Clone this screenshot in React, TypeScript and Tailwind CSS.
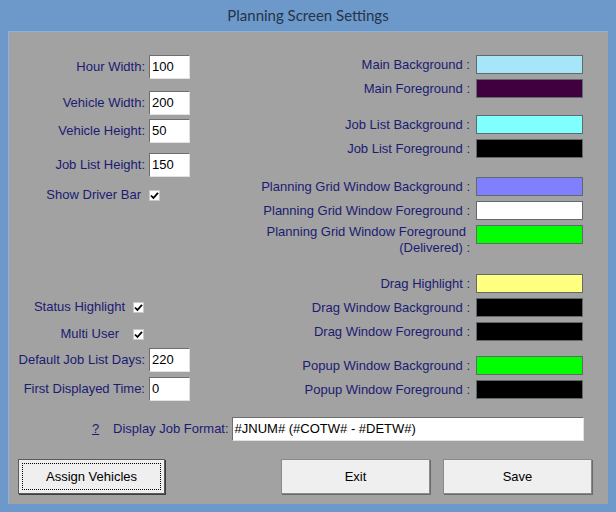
import React from 'react';

const font = { fontFamily: '"Liberation Sans", Arial, sans-serif' };

function TextBox({ value, width = 'w-[41px]' }: { value: string; width?: string }) {
  return (
    <div
      className={`${width} h-[24px] bg-white border-t border-l border-t-[#6e6e6e] border-l-[#6e6e6e] border-b border-r border-b-[#e2e2e2] border-r-[#e2e2e2] flex items-center pl-[2px] text-[13px] text-black`}
    >
      {value}
    </div>
  );
}

function CheckBox() {
  return (
    <div className="w-[11px] h-[11px] bg-white border border-[#c8c8c8] flex items-center justify-center">
      <svg width="9" height="9" viewBox="0 0 9 9">
        <path d="M1 4.5 L3.4 7 L8 1.8" fill="none" stroke="#000" strokeWidth="1.8" />
      </svg>
    </div>
  );
}

function Swatch({ color }: { color: string }) {
  return <div className={`w-[107px] h-[19px] border border-[#5f6a6a] ${color}`} />;
}

function ColorRow({ label, color, mt }: { label: string; color: string; mt: string }) {
  return (
    <div className={`flex h-[19px] items-center justify-end ${mt}`}>
      <span className="mr-[6px] whitespace-nowrap">{label}</span>
      <Swatch color={color} />
    </div>
  );
}

export default function App() {
  return (
    <div className="w-[616px] h-[512px] bg-[#6c99c9] flex flex-col text-[13px] text-[#1b1b72]" style={font}>
      {/* title bar */}
      <div className="h-[31px] flex items-center justify-center">
        <span className="text-[15px] text-[#24344a]" style={{ fontFamily: 'Lato, "Noto Sans", sans-serif' }}>
          Planning Screen Settings
        </span>
      </div>

      {/* client area */}
      <div className="mx-[8px] h-[473px] bg-[#a2a2a2] flex flex-col border-t border-l border-[#8fb3da]">
        <div className="flex">
          {/* left column */}
          <div className="w-[223px] flex flex-col mt-[23px]">
            <div className="flex h-[24px] items-center">
              <span className="w-[140px] text-right pr-[4px]">Hour Width:</span>
              <TextBox value="100" />
            </div>
            <div className="flex h-[24px] items-center mt-[12px]">
              <span className="w-[140px] text-right pr-[4px]">Vehicle Width:</span>
              <TextBox value="200" />
            </div>
            <div className="flex h-[24px] items-center mt-[4px]">
              <span className="w-[140px] text-right pr-[4px]">Vehicle Height:</span>
              <TextBox value="50" />
            </div>
            <div className="flex h-[24px] items-center mt-[10px]">
              <span className="w-[140px] text-right pr-[4px]">Job List Height:</span>
              <TextBox value="150" />
            </div>
            <div className="flex h-[24px] items-center mt-[6px]">
              <span className="w-[132px] text-right">Show Driver Bar</span>
              <div className="ml-[8px]">
                <CheckBox />
              </div>
            </div>

            <div className="flex h-[24px] items-center mt-[88px]">
              <span className="w-[116px] text-right">Status Highlight</span>
              <div className="ml-[8px]">
                <CheckBox />
              </div>
            </div>
            <div className="flex h-[24px] items-center mt-[3px]">
              <span className="w-[110px] text-right">Multi User</span>
              <div className="ml-[14px]">
                <CheckBox />
              </div>
            </div>
            <div className="flex h-[24px] items-center mt-[2px]">
              <span className="w-[140px] text-right pr-[4px] whitespace-nowrap">Default Job List Days:</span>
              <TextBox value="220" />
            </div>
            <div className="flex h-[24px] items-center mt-[5px]">
              <span className="w-[140px] text-right pr-[4px] whitespace-nowrap">First Displayed Time:</span>
              <TextBox value="0" />
            </div>
          </div>

          {/* right column */}
          <div className="flex-1 flex flex-col mt-[23px] pr-[25px]">
            <ColorRow label="Main Background :" color="bg-[#a6e6f8]" mt="" />
            <ColorRow label="Main Foreground :" color="bg-[#400040]" mt="mt-[5px]" />
            <ColorRow label="Job List Background :" color="bg-[#80ffff]" mt="mt-[17px]" />
            <ColorRow label="Job List Foreground :" color="bg-black" mt="mt-[5px]" />
            <ColorRow label="Planning Grid Window Background :" color="bg-[#8080ff]" mt="mt-[19px]" />
            <ColorRow label="Planning Grid Window Foreground :" color="bg-white" mt="mt-[5px]" />
            <div className="flex items-start justify-end mt-[5px]">
              <div className="mr-[6px] text-right leading-[16px] -mt-[1px]">
                <div className="pr-[4px] whitespace-nowrap">Planning Grid Window Foreground</div>
                <div>(Delivered) :</div>
              </div>
              <Swatch color="bg-[#00ff00]" />
            </div>
            <ColorRow label="Drag Highlight :" color="bg-[#ffff80]" mt="mt-[18px]" />
            <ColorRow label="Drag Window Background :" color="bg-black" mt="mt-[5px]" />
            <ColorRow label="Drag Window Foreground :" color="bg-black" mt="mt-[5px]" />
            <ColorRow label="Popup Window Background :" color="bg-[#00ff00]" mt="mt-[15px]" />
            <ColorRow label="Popup Window Foreground :" color="bg-black" mt="mt-[5px]" />
          </div>
        </div>

        {/* job format */}
        <div className="flex h-[24px] items-center mt-[16px] pl-[83px]">
          <span className="underline w-[8px]">?</span>
          <span className="ml-[13px] whitespace-nowrap">Display Job Format:</span>
          <div className="ml-[3px]">
            <TextBox value="#JNUM# (#COTW# - #DETW#)" width="w-[352px]" />
          </div>
        </div>

        {/* buttons */}
        <div className="flex mt-[18px] text-black">
          <button className="relative ml-[9px] w-[147px] h-[35px] bg-[#efefef] border border-[#5a5a5a] shadow-[1px_1px_0_#3c3c3c] flex items-center justify-center">
            <span className="absolute inset-[3px] border border-dotted border-black" />
            Assign Vehicles
          </button>
          <button className="ml-[116px] w-[149px] h-[35px] bg-[#efefef] border border-[#8a8a8a] shadow-[1px_1px_0_#6a6a6a] flex items-center justify-center">
            Exit
          </button>
          <button className="ml-[13px] w-[149px] h-[35px] bg-[#efefef] border border-[#8a8a8a] shadow-[1px_1px_0_#6a6a6a] flex items-center justify-center">
            Save
          </button>
        </div>
      </div>
    </div>
  );
}
